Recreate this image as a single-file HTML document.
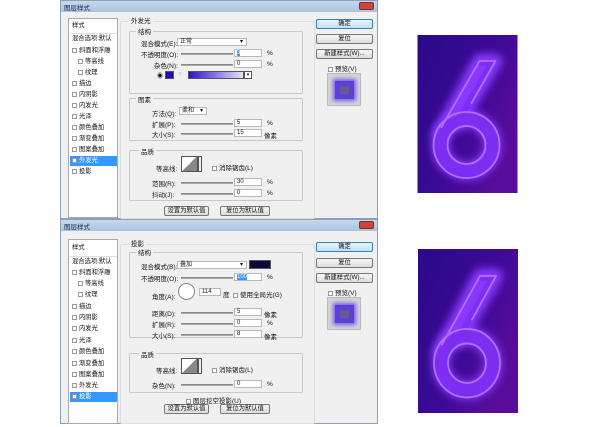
<!DOCTYPE html>
<html><head><meta charset="utf-8"><style>
*{margin:0;padding:0;box-sizing:border-box}
body{width:600px;height:427px;background:#fff;position:relative;overflow:hidden;font-family:"Liberation Sans","Noto Sans CJK SC",sans-serif;font-size:6.5px;color:#111}
.a{position:absolute;white-space:nowrap}
.dlg{position:absolute;left:60px;width:318px;background:#f0f0f0;border:1px solid #8a9fb8}
.tb{position:absolute;left:0;top:0;width:100%;height:11px;background:linear-gradient(#c6d8ec,#a9c3de);}
.tb span{position:absolute;left:3px;top:1px;font-size:6.5px;color:#1a2a4a}
.cls{position:absolute;right:3px;top:1px;width:15px;height:8px;background:#c9463a;border:1px solid #8a2a20;border-radius:2px}
.lp{position:absolute;left:7px;width:50px;background:#fff;border:1px solid #aaa}
.row{position:absolute;left:1px;width:47px;height:10px;line-height:10px;font-size:6.3px;padding-left:2px}
.cb{display:inline-block;width:5px;height:5px;border:1px solid #999;background:#fff;margin-right:2px;vertical-align:-0.5px}
.grp{position:absolute;border:1px solid #c8c8c8;border-radius:2px}
.gl{position:absolute;background:#f0f0f0;padding:0 2px;font-size:6.5px}
.sl{position:absolute;height:2px;background:#a8a8a8;border-top:1px solid #888}
.in{position:absolute;height:8px;background:#fff;border:1px solid #b8b8b8;font-size:6px;line-height:7px;padding-left:2px}
.btn{position:absolute;height:10px;background:linear-gradient(#f6f6f6,#dcdcdc);border:1px solid #777;border-radius:2px;text-align:center;line-height:8px;font-size:6.3px}
.prev{position:absolute;width:34px;height:33px;background:#d4d4d4;border:1px solid #bbb}
.prev div{position:absolute;left:7px;top:7px;width:19px;height:18px;background:#5a3fd8;box-shadow:0 0 4px 2px #7a5af0}
.prev div i{position:absolute;left:5px;top:5px;width:9px;height:8px;background:#6a5a90}
</style></head><body>

<!-- TOP DIALOG -->
<div class="dlg" style="top:0;height:219px">
<div class="tb"><span>图层样式</span><div class="cls"></div></div>
<div class="lp" style="top:17px;height:200px">
 <div class="row" style="top:2px">样式</div>
 <div class="row" style="top:14px;border-top:1px solid #ddd">混合选项:默认</div>
 <div class="row" style="top:27px"><span class="cb"></span>斜面和浮雕</div>
 <div class="row" style="top:38px;padding-left:8px"><span class="cb"></span>等高线</div>
 <div class="row" style="top:49px;padding-left:8px"><span class="cb"></span>纹理</div>
 <div class="row" style="top:60px"><span class="cb"></span>描边</div>
 <div class="row" style="top:71px"><span class="cb"></span>内阴影</div>
 <div class="row" style="top:82px"><span class="cb"></span>内发光</div>
 <div class="row" style="top:93px"><span class="cb"></span>光泽</div>
 <div class="row" style="top:104px"><span class="cb"></span>颜色叠加</div>
 <div class="row" style="top:115px"><span class="cb"></span>渐变叠加</div>
 <div class="row" style="top:126px"><span class="cb"></span>图案叠加</div>
 <div class="row" style="top:137px;background:#3399ff;color:#fff"><span class="cb"></span>外发光</div>
 <div class="row" style="top:148px"><span class="cb"></span>投影</div>
</div>
<div class="grp" style="left:59px;top:20px;width:195px;height:198px;border-color:#ddd"></div>
<div class="gl a" style="left:68px;top:14px">外发光</div>
<div class="grp" style="left:68px;top:30px;width:174px;height:63px"></div>
<div class="gl a" style="left:75px;top:25px">结构</div>
<div class="a" style="left:80px;top:37px">混合模式(E):</div>
<div class="in" style="left:116px;top:37px;width:70px">正常<span style="position:absolute;right:3px">▾</span></div>
<div class="a" style="left:80px;top:48px">不透明度(O):</div>
<div class="sl" style="left:120px;top:52px;width:52px"></div>
<div class="in" style="left:173px;top:48px;width:28px"><span style="background:#3399ff;color:#fff">3</span></div>
<div class="a" style="left:206px;top:49px">%</div>
<div class="a" style="left:93px;top:59px">杂色(N):</div>
<div class="sl" style="left:120px;top:63px;width:52px"></div>
<div class="in" style="left:173px;top:59px;width:28px">0</div>
<div class="a" style="left:206px;top:60px">%</div>
<div class="a" style="left:96px;top:70px;font-size:6px">◉</div>
<div class="a" style="left:104px;top:70px;width:9px;height:8px;background:#2a0ab8;border:1px solid #555"></div>
<div class="a" style="left:117px;top:70px;font-size:6px;color:#888">○</div>
<div class="a" style="left:127px;top:70px;width:56px;height:8px;background:linear-gradient(90deg,#3010c8,#8a78e8 50%,#e4e4f4);border:1px solid #555"></div>
<div class="a" style="left:183px;top:70px;width:8px;height:8px;background:#fff;border:1px solid #555;font-size:5px;text-align:center;line-height:6px">▾</div>
<div class="grp" style="left:68px;top:97px;width:174px;height:43px"></div>
<div class="gl a" style="left:75px;top:93px">图素</div>
<div class="a" style="left:91px;top:107px">方法(Q):</div>
<div class="in" style="left:118px;top:106px;width:28px">柔和 <span style="position:absolute;right:3px">▾</span></div>
<div class="a" style="left:91px;top:118px">扩展(P):</div>
<div class="sl" style="left:120px;top:122px;width:52px"></div>
<div class="in" style="left:173px;top:118px;width:28px">5</div>
<div class="a" style="left:206px;top:119px">%</div>
<div class="a" style="left:91px;top:128px">大小(S):</div>
<div class="sl" style="left:120px;top:132px;width:52px"></div>
<div class="in" style="left:173px;top:128px;width:28px">15</div>
<div class="a" style="left:203px;top:129px">像素</div>
<div class="grp" style="left:68px;top:149px;width:174px;height:51px"></div>
<div class="gl a" style="left:78px;top:145px">品质</div>
<div class="a" style="left:95px;top:162px">等高线:</div>
<div class="a" style="left:120px;top:155px;width:17px;height:16px;background:linear-gradient(135deg,#fff 50%,#888 50%);border:1px solid #555"></div>
<div class="a" style="left:137px;top:155px;width:4px;height:16px;background:#eee;border:1px solid #555"></div>
<div class="a" style="left:151px;top:161px"><span class="cb"></span>消除锯齿(L)</div>
<div class="a" style="left:91px;top:177px">范围(R):</div>
<div class="sl" style="left:120px;top:181px;width:52px"></div>
<div class="in" style="left:173px;top:177px;width:28px">30</div>
<div class="a" style="left:206px;top:178px">%</div>
<div class="a" style="left:91px;top:188px">抖动(J):</div>
<div class="sl" style="left:120px;top:192px;width:52px"></div>
<div class="in" style="left:173px;top:188px;width:28px">0</div>
<div class="a" style="left:206px;top:189px">%</div>
<div class="btn" style="left:103px;top:205px;width:45px">设置为默认值</div>
<div class="btn" style="left:159px;top:205px;width:50px">复位为默认值</div>
<div class="btn" style="left:255px;top:18px;width:57px;border-color:#3c7fb1;background:linear-gradient(#e8f4fc,#bfe0f4)">确定</div>
<div class="btn" style="left:255px;top:33px;width:57px">复位</div>
<div class="btn" style="left:255px;top:48px;width:57px">新建样式(W)...</div>
<div class="a" style="left:267px;top:62px"><span class="cb"></span>预览(V)</div>
<div class="prev" style="left:266px;top:72px"><div><i></i></div></div>
</div>

<!-- BOTTOM DIALOG -->
<div class="dlg" style="top:219px;height:205px">
<div class="tb"><span>图层样式</span><div class="cls"></div></div>
<div class="lp" style="top:19px;height:185px">
 <div class="row" style="top:3px">样式</div>
 <div class="row" style="top:16px;border-top:1px solid #ddd">混合选项:默认</div>
 <div class="row" style="top:28px"><span class="cb"></span>斜面和浮雕</div>
 <div class="row" style="top:39px;padding-left:8px"><span class="cb"></span>等高线</div>
 <div class="row" style="top:50px;padding-left:8px"><span class="cb"></span>纹理</div>
 <div class="row" style="top:62px"><span class="cb"></span>描边</div>
 <div class="row" style="top:73px"><span class="cb"></span>内阴影</div>
 <div class="row" style="top:84px"><span class="cb"></span>内发光</div>
 <div class="row" style="top:96px"><span class="cb"></span>光泽</div>
 <div class="row" style="top:107px"><span class="cb"></span>颜色叠加</div>
 <div class="row" style="top:119px"><span class="cb"></span>渐变叠加</div>
 <div class="row" style="top:130px"><span class="cb"></span>图案叠加</div>
 <div class="row" style="top:141px"><span class="cb"></span>外发光</div>
 <div class="row" style="top:152px;background:#3399ff;color:#fff"><span class="cb"></span>投影</div>
</div>
<div class="grp" style="left:59px;top:24px;width:195px;height:180px;border-color:#ddd"></div>
<div class="gl a" style="left:68px;top:18px">投影</div>
<div class="grp" style="left:68px;top:32px;width:174px;height:86px"></div>
<div class="gl a" style="left:75px;top:27px">结构</div>
<div class="a" style="left:80px;top:41px">混合模式(B):</div>
<div class="in" style="left:116px;top:41px;width:70px">叠加<span style="position:absolute;right:3px">▾</span></div>
<div class="a" style="left:188px;top:40px;width:22px;height:9px;background:#0c0838;border:1px solid #555"></div>
<div class="a" style="left:80px;top:53px">不透明度(O):</div>
<div class="sl" style="left:120px;top:57px;width:52px"></div>
<div class="in" style="left:173px;top:53px;width:28px"><span style="background:#3399ff;color:#fff">100</span></div>
<div class="a" style="left:206px;top:54px">%</div>
<div class="a" style="left:91px;top:71px">角度(A):</div>
<div class="a" style="left:117px;top:63px;width:17px;height:17px;border-radius:50%;background:#fff;border:1px solid #888"></div>
<div class="in" style="left:138px;top:68px;width:22px">114</div>
<div class="a" style="left:162px;top:69px">度</div>
<div class="a" style="left:172px;top:69px"><span class="cb"></span>使用全局光(G)</div>
<div class="a" style="left:91px;top:88px">距离(D):</div>
<div class="sl" style="left:120px;top:92px;width:52px"></div>
<div class="in" style="left:173px;top:88px;width:28px">5</div>
<div class="a" style="left:203px;top:89px">像素</div>
<div class="a" style="left:91px;top:99px">扩展(R):</div>
<div class="sl" style="left:120px;top:103px;width:52px"></div>
<div class="in" style="left:173px;top:99px;width:28px">0</div>
<div class="a" style="left:206px;top:100px">%</div>
<div class="a" style="left:91px;top:110px">大小(S):</div>
<div class="sl" style="left:120px;top:114px;width:52px"></div>
<div class="in" style="left:173px;top:110px;width:28px">8</div>
<div class="a" style="left:203px;top:111px">像素</div>
<div class="grp" style="left:68px;top:133px;width:174px;height:40px"></div>
<div class="gl a" style="left:78px;top:129px">品质</div>
<div class="a" style="left:95px;top:145px">等高线:</div>
<div class="a" style="left:120px;top:138px;width:17px;height:16px;background:linear-gradient(135deg,#fff 50%,#888 50%);border:1px solid #555"></div>
<div class="a" style="left:137px;top:138px;width:4px;height:16px;background:#eee;border:1px solid #555"></div>
<div class="a" style="left:151px;top:144px"><span class="cb"></span>消除锯齿(L)</div>
<div class="a" style="left:91px;top:160px">杂色(N):</div>
<div class="sl" style="left:120px;top:164px;width:52px"></div>
<div class="in" style="left:173px;top:160px;width:28px">0</div>
<div class="a" style="left:206px;top:161px">%</div>
<div class="a" style="left:125px;top:175px"><span class="cb"></span>图层挖空投影(U)</div>
<div class="btn" style="left:103px;top:184px;width:45px">设置为默认值</div>
<div class="btn" style="left:159px;top:184px;width:50px">复位为默认值</div>
<div class="btn" style="left:255px;top:22px;width:57px;border-color:#3c7fb1;background:linear-gradient(#e8f4fc,#bfe0f4)">确定</div>
<div class="btn" style="left:255px;top:38px;width:57px">复位</div>
<div class="btn" style="left:255px;top:53px;width:57px">新建样式(W)...</div>
<div class="a" style="left:267px;top:67px"><span class="cb"></span>预览(V)</div>
<div class="prev" style="left:266px;top:77px"><div><i></i></div></div>
</div>

<!-- Neon sixes -->
<svg class="a" style="left:417px;top:35px" width="101" height="158" viewBox="0 0 100 158">
<defs><linearGradient id="bg" x1="0" y1="0" x2="1" y2="0.6"><stop offset="0" stop-color="#2a0a88"/><stop offset="0.6" stop-color="#3c0a96"/><stop offset="1" stop-color="#5a0c9a"/></linearGradient>
<filter id="gl" x="-50%" y="-50%" width="200%" height="200%"><feGaussianBlur stdDeviation="4"/></filter></defs>
<rect width="100" height="158" fill="url(#bg)"/>
<g fill="none" stroke-linecap="round" stroke-linejoin="round">
<path d="M62 26 L78 26 L42 86 M62 26 L22 98" stroke="#8a38ff" stroke-width="14" filter="url(#gl)"/>
<circle cx="49" cy="110" r="26" stroke="#8a38ff" stroke-width="18" filter="url(#gl)"/>
<circle cx="49" cy="110" r="26" stroke="#7a2cf0" stroke-width="10" opacity="0.8"/>
<path d="M64 28 L74 28 L44 80" stroke="#7a2cf0" stroke-width="6" opacity="0.8"/>
<circle cx="49" cy="110" r="33" stroke="#b070ff" stroke-width="1.8"/>
<circle cx="49" cy="110" r="19" stroke="#b070ff" stroke-width="1.8"/>
<path d="M62 26 L78 26 L54 68 M62 26 L24 92" stroke="#b070ff" stroke-width="1.8"/>
</g></svg>
<svg class="a" style="left:418px;top:249px" width="100" height="164" viewBox="0 0 100 158" preserveAspectRatio="none">
<rect width="100" height="158" fill="url(#bg)"/>
<g fill="none" stroke-linecap="round" stroke-linejoin="round">
<path d="M62 26 L78 26 L42 86 M62 26 L22 98" stroke="#8a38ff" stroke-width="14" filter="url(#gl)"/>
<circle cx="49" cy="110" r="26" stroke="#8a38ff" stroke-width="18" filter="url(#gl)"/>
<circle cx="49" cy="110" r="26" stroke="#7a2cf0" stroke-width="10" opacity="0.8"/>
<path d="M64 28 L74 28 L44 80" stroke="#7a2cf0" stroke-width="6" opacity="0.8"/>
<circle cx="49" cy="110" r="33" stroke="#b070ff" stroke-width="1.8"/>
<circle cx="49" cy="110" r="19" stroke="#b070ff" stroke-width="1.8"/>
<path d="M62 26 L78 26 L54 68 M62 26 L24 92" stroke="#b070ff" stroke-width="1.8"/>
</g></svg>
</body></html>
